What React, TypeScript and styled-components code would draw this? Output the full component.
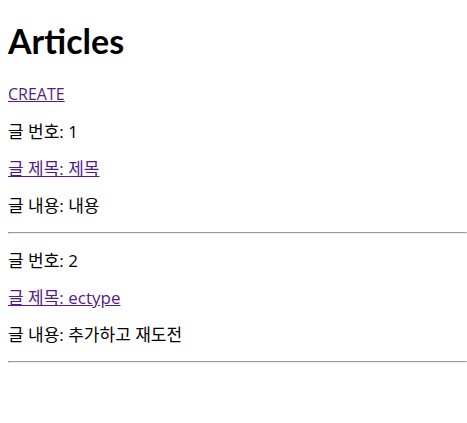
import React from "react";
import styled, { createGlobalStyle } from "styled-components";

const articles = [
	{ id: 1, title: "제목", content: "내용" },
	{ id: 2, title: "ectype", content: "추가하고 재도전" },
];

export default function App() {
	return (
		<Page>
			<GlobalStyle />
			<Title>Articles</Title>
			<Line>
				<TextLink href="#create">CREATE</TextLink>
			</Line>
			{articles.map((article) => (
				<Article key={article.id}>
					<Line $korean>글 번호: {article.id}</Line>
					<Line $korean>
						<TextLink href={`#article-${article.id}`}>글 제목: {article.title}</TextLink>
					</Line>
					<Line $korean>글 내용: {article.content}</Line>
					<Divider />
				</Article>
			))}
		</Page>
	);
}

const GlobalStyle = createGlobalStyle`
	body {
		margin: 0;
		background: #ffffff;
		color: #000000;
		font-family: "Open Sans", "Noto Sans CJK KR", sans-serif;
		font-size: 16px;
	}
`;

const Page = styled.main`
	display: flow-root;
	padding: 0 0 8px 8px;
`;

const Title = styled.h1`
	font-family: Lato, "Open Sans", sans-serif;
	font-size: 34px;
	font-weight: 700;
	line-height: 43px;
	margin: 19px 0 22px;
`;

const Line = styled.p<{ $korean?: boolean }>`
	margin: 16px 0;
	line-height: 21px;
	font-size: ${(p) => (p.$korean ? "17px" : "16px")};
`;

const TextLink = styled.a`
	color: #551a8b;
	text-decoration: underline;
`;

const Article = styled.section``;

const Divider = styled.hr`
	margin: 8px 0;
	border: 1px inset;
	color: gray;
`;
